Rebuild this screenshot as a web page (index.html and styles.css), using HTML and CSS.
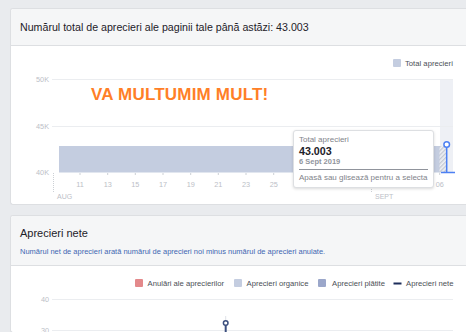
FILE: index.html
```html
<!DOCTYPE html>
<html lang="ro">
<head>
<meta charset="utf-8">
<title>Aprecieri</title>
<link rel="stylesheet" href="styles.css">
</head>
<body>
<div class="page">
  <section class="card">
    <header class="card-head">
      <h2 class="title-total">Numărul total de aprecieri ale paginii tale până astăzi: 43.003</h2>
    </header>
    <div class="card-body chart1">
      <svg class="chart-svg" width="455" height="158" viewBox="11 46 455 158">
        <defs>
          <pattern id="hatch" width="3" height="3" patternUnits="userSpaceOnUse" patternTransform="rotate(45)">
            <rect width="3" height="3" fill="#eef0f5"/>
            <rect width="1.3" height="3" fill="#c3c8d3"/>
          </pattern>
        </defs>
        <rect x="393" y="59" width="8" height="8" rx="1" fill="#c4cde0"/>
        <text x="405" y="66" class="legend-t">Total aprecieri</text>
        <rect x="440" y="79" width="13" height="94" fill="#eef0f5"/>
        <line x1="52" y1="79.5" x2="453" y2="79.5" class="grid"/>
        <line x1="52" y1="126.5" x2="453" y2="126.5" class="grid"/>
        <text x="49" y="82" class="ylab">50K</text>
        <text x="49" y="129" class="ylab">45K</text>
        <text x="49" y="175" class="ylab">40K</text>
        <rect x="59" y="146" width="381" height="26.5" fill="#c4cde0"/>
        <rect x="439.5" y="146" width="7" height="26.5" fill="url(#hatch)"/>
        <line x1="446.7" y1="147" x2="446.7" y2="172.5" stroke="#4d80f3" stroke-width="1.5"/>
        <line x1="441" y1="172.6" x2="455" y2="172.6" stroke="#4d80f3" stroke-width="1.5"/>
        <circle cx="446.7" cy="144.5" r="2.8" fill="#fff" stroke="#4d80f3" stroke-width="1.5"/>
        <line x1="53.5" y1="173" x2="53.5" y2="192" class="dots"/>
        <line x1="371.5" y1="173" x2="371.5" y2="192" class="dots"/>
        <g class="ticks">
          <line x1="80" y1="173" x2="80" y2="175"/>
          <line x1="107.7" y1="173" x2="107.7" y2="175"/>
          <line x1="135.3" y1="173" x2="135.3" y2="175"/>
          <line x1="163" y1="173" x2="163" y2="175"/>
          <line x1="190.7" y1="173" x2="190.7" y2="175"/>
          <line x1="218.3" y1="173" x2="218.3" y2="175"/>
          <line x1="246" y1="173" x2="246" y2="175"/>
          <line x1="273.7" y1="173" x2="273.7" y2="175"/>
          <line x1="301.3" y1="173" x2="301.3" y2="175"/>
          <line x1="329" y1="173" x2="329" y2="175"/>
          <line x1="356.7" y1="173" x2="356.7" y2="175"/>
          <line x1="384.3" y1="173" x2="384.3" y2="175"/>
          <line x1="412" y1="173" x2="412" y2="175"/>
          <line x1="439.7" y1="173" x2="439.7" y2="175"/>
        </g>
        <g class="xlab">
          <text x="80" y="187">11</text>
          <text x="107.7" y="187">13</text>
          <text x="135.3" y="187">15</text>
          <text x="163" y="187">17</text>
          <text x="190.7" y="187">19</text>
          <text x="218.3" y="187">21</text>
          <text x="246" y="187">23</text>
          <text x="273.7" y="187">25</text>
          <text x="301.3" y="187">27</text>
          <text x="329" y="187">29</text>
          <text x="356.7" y="187">31</text>
          <text x="384.3" y="187">02</text>
          <text x="412" y="187">04</text>
          <text x="439.7" y="187">06</text>
        </g>
        <text x="57" y="198.5" class="month">AUG</text>
        <text x="375" y="198.5" class="month">SEPT</text>
      </svg>
      <div class="thanks">VA MULTUMIM MULT!</div>
      <div class="tooltip">
        <div class="tt-label">Total aprecieri</div>
        <div class="tt-value">43.003</div>
        <div class="tt-date">6 Sept 2019</div>
        <div class="tt-rule"></div>
        <div class="tt-hint">Apasă sau glisează pentru a selecta</div>
      </div>
    </div>
  </section>

  <section class="card card-net">
    <header class="card-head head-net">
      <h2 class="title-net">Aprecieri nete</h2>
      <p class="subtitle">Numărul net de aprecieri arată numărul de aprecieri noi minus numărul de aprecieri anulate.</p>
    </header>
    <div class="card-body chart2">
      <svg class="chart-svg" width="455" height="66" viewBox="11 266 455 66">
        <rect x="135" y="279" width="8" height="8" rx="1" fill="#e3898b"/>
        <text x="147.5" y="286" class="legend-t">Anulări ale aprecierilor</text>
        <rect x="234" y="279" width="8" height="8" rx="1" fill="#c4cde0"/>
        <text x="246.5" y="286" class="legend-t">Aprecieri organice</text>
        <rect x="318" y="279" width="8" height="8" rx="1" fill="#9ba7ca"/>
        <text x="332" y="286" class="legend-t">Aprecieri plătite</text>
        <line x1="393.5" y1="283.5" x2="401.5" y2="283.5" stroke="#1d2d5a" stroke-width="2"/>
        <text x="406" y="286" class="legend-t">Aprecieri nete</text>
        <line x1="52" y1="299.5" x2="453" y2="299.5" class="grid"/>
        <line x1="52" y1="330.5" x2="453" y2="330.5" class="grid"/>
        <text x="49" y="302" class="ylab">40</text>
        <text x="49" y="333" class="ylab">30</text>
        <line x1="225.7" y1="316" x2="225.7" y2="320" stroke="#dfe2e8" stroke-width="1"/>
        <line x1="225.7" y1="325" x2="225.7" y2="336" stroke="#3c4f7e" stroke-width="2"/>
        <circle cx="225.7" cy="323" r="2.3" fill="#fff" stroke="#3c4f7e" stroke-width="1.5"/>
      </svg>
    </div>
  </section>
</div>
</body>
</html>
```

FILE: styles.css
```css
html, body {
  margin: 0;
  padding: 0;
}
body {
  background: #e9ebee;
  font-family: "Liberation Sans", Arial, sans-serif;
  color: #1d2129;
  overflow: hidden;
  width: 466px;
  height: 332px;
}
.page {
  padding: 8px 0 0 10px;
  display: flex;
  flex-direction: column;
  gap: 10px;
  width: 456px;
}
.card {
  background: #fff;
  border: 1px solid #dddfe2;
  border-right: none;
  border-radius: 3px 0 0 3px;
  width: 455px;
  overflow: hidden;
}
.card-head {
  background: #f5f6f7;
  border-bottom: 1px solid #dddfe2;
  padding: 0 9px;
}
.title-total {
  margin: 0;
  height: 36px;
  line-height: 36px;
  font-size: 10.65px;
  font-weight: normal;
  color: #1d2129;
}
.card-body {
  position: relative;
}
.chart1 {
  height: 158px;
}
.chart-svg {
  display: block;
}
.legend-t {
  font-family: "Liberation Sans", Arial, sans-serif;
  font-size: 7.7px;
  fill: #4b4f56;
}
.grid {
  stroke: #ebedf0;
  stroke-width: 1;
}
.ylab {
  font-family: "Liberation Sans", Arial, sans-serif;
  font-size: 7.3px;
  fill: #bcc0c7;
  text-anchor: end;
}
.ticks line {
  stroke: #ccd0d5;
  stroke-width: 1;
}
.xlab text {
  font-family: "Liberation Sans", Arial, sans-serif;
  font-size: 7.3px;
  fill: #bcc0c7;
  text-anchor: middle;
}
.month {
  font-family: "Liberation Sans", Arial, sans-serif;
  font-size: 7px;
  fill: #bcc0c7;
}
.dots {
  stroke: #ccd0d5;
  stroke-width: 1;
  stroke-dasharray: 1 1;
}
.thanks {
  position: absolute;
  left: 80px;
  top: 40px;
  font-size: 17px;
  line-height: 17px;
  font-weight: bold;
  letter-spacing: 0.2px;
  color: #ff7f27;
  white-space: nowrap;
}
.tooltip {
  position: absolute;
  left: 282px;
  top: 84px;
  width: 129px;
  height: 52px;
  padding: 4px 5px 0 5px;
  background: #fff;
  border: 1px solid #dddfe2;
  border-radius: 3px;
  box-shadow: 0 1px 3px rgba(0, 0, 0, 0.15);
}
.tt-label {
  font-size: 8px;
  line-height: 10px;
  color: #7f838a;
}
.tt-value {
  font-size: 10.7px;
  line-height: 12px;
  font-weight: bold;
  color: #1d2129;
}
.tt-date {
  font-size: 7.5px;
  line-height: 9px;
  font-weight: bold;
  color: #90949c;
}
.tt-rule {
  margin-top: 3px;
  height: 1px;
  background: #90949c;
}
.tt-hint {
  margin-top: 3px;
  font-size: 8px;
  line-height: 10px;
  color: #7f838a;
  white-space: nowrap;
}
.head-net {
  padding-top: 10px;
  padding-bottom: 8px;
}
.title-net {
  margin: 0;
  font-size: 11px;
  line-height: 14px;
  font-weight: normal;
  color: #1d2129;
}
.subtitle {
  margin: 7px 0 0 0;
  font-size: 7.5px;
  line-height: 10px;
  color: #4267b2;
  white-space: nowrap;
}
.chart2 {
  height: 66px;
}
```
